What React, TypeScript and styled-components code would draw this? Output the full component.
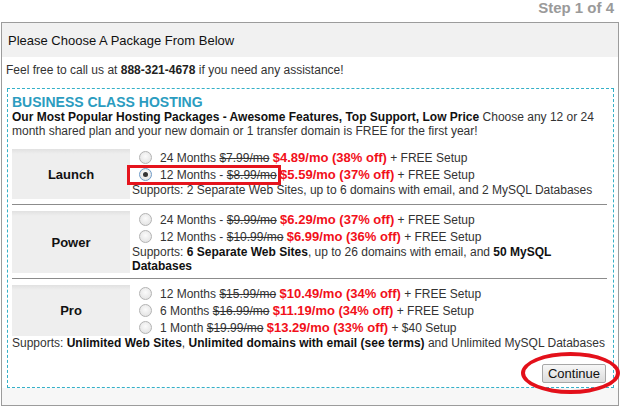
import React from 'react';
import styled, { createGlobalStyle } from 'styled-components';

const GlobalStyle = createGlobalStyle`
    html, body {
        margin: 0;
        padding: 0;
        background: #fff;
    }
    body {
        font-family: "Liberation Sans", Arial, sans-serif;
        font-size: 12px;
        color: #333;
    }
`;

const Page = styled.div`
    width: 620px;
    height: 412px;
    overflow: hidden;
`;
const StepBar = styled.div`
    height: 22px;
    line-height: 15px;
    padding-right: 6px;
    text-align: right;
    font-size: 15px;
    font-weight: bold;
    color: #9a9a9a;
`;
const Panel = styled.div`
    margin: 0 1px;
    border: 1px solid #9c9c9c;
    background: #f7f7f7;
`;
const PanelHeader = styled.div`
    height: 34px;
    display: flex;
    align-items: center;
    padding-left: 6px;
    background: #f1f1f1;
    font-size: 13px;
    color: #111;
`;
const Note = styled.div`
    background: #fff;
    padding: 6px 0 11px 4px;
    line-height: 14px;
    color: #333;

    b { color: #222; }
`;
const OfferWrap = styled.div`
    background: #fff;
`;
const TopRule = styled.div`
    margin: 0 4px 0 5px;
    border-top: 1px dashed #35b0c8;
`;
const Offer = styled.div`
    margin: 0 4px 0 5px;
    padding: 5px 6px 4px 4px;
    border: 1px dashed #35b0c8;
    border-top: 0;
    background: #fff;
`;
const OfferTitle = styled.div`
    font-size: 14px;
    line-height: 16px;
    font-weight: bold;
    color: #2b9cc0;
`;
const Intro = styled.p`
    margin: 0 0 11px;
    line-height: 14px;
    color: #333;

    b { color: #111; }
`;
const Plan = styled.div`
    display: grid;
    grid-template-columns: 118px 1fr;
    column-gap: 2px;
`;
const PlanName = styled.div`
    display: flex;
    align-items: center;
    justify-content: center;
    background: linear-gradient(#e1e1e1, #eeeeee 5px, #eeeeee);
    font-size: 13px;
    font-weight: bold;
    color: #111;
`;
const Options = styled.div<{ $pad: number }>`
    padding-bottom: ${p => p.$pad}px;
`;
const Option = styled.div`
    position: relative;
    height: 17px;
    display: flex;
    align-items: center;
    white-space: nowrap;
    color: #333;
`;
const Radio = styled.span<{ $on?: boolean }>`
    box-sizing: border-box;
    width: 13px;
    height: 13px;
    margin: 0 8px 0 7px;
    border-radius: 50%;
    border: 1px solid ${p => (p.$on ? '#6f9bc8' : '#b3b3b3')};
    background: radial-gradient(circle at 50% 40%, #fbfbfb, #dedede);
    display: flex;
    align-items: center;
    justify-content: center;
    flex: none;

    &::after {
        content: '';
        width: 5px;
        height: 5px;
        border-radius: 50%;
        background: ${p => (p.$on ? '#333' : 'transparent')};
    }
`;
const Old = styled.s`
    color: #333;
`;
const Price = styled.b`
    font-size: 13px;
    color: #f2101a;
`;
const Supports = styled.div<{ $wide?: boolean }>`
    line-height: 14px;
    color: #333;
    white-space: ${p => (p.$wide ? 'nowrap' : 'normal')};

    b { color: #111; }
`;
const Rule = styled.hr`
    margin: 5px 0 6px;
    border: 0;
    border-top: 1px solid #8c8c8c;
`;
const Actions = styled.div`
    display: flex;
    justify-content: flex-end;
    padding: 14px 1px 0 0;
`;
const ButtonWrap = styled.div`
    position: relative;
`;
const Button = styled.button`
    box-sizing: border-box;
    width: 64px;
    height: 19px;
    padding: 0;
    border: 1px solid #a7a7a7;
    border-radius: 2px;
    background: linear-gradient(#f7f7f7, #dcdcdc);
    font-family: "Liberation Sans", Arial, sans-serif;
    font-size: 13px;
    color: #111;
`;
const Highlight = styled.span`
    position: absolute;
    left: -5px;
    top: -1px;
    width: 154px;
    height: 20px;
    box-sizing: border-box;
    border: 3px solid #e5141d;
`;
const Circle = styled.span`
    position: absolute;
    left: -21px;
    top: -12px;
    width: 99px;
    height: 42px;
    box-sizing: border-box;
    border: 4px solid #e3101a;
    border-radius: 50%;
    pointer-events: none;
`;
const Footer = styled.div`
    height: 17px;
    background: #f7f7f7;
`;

type Row = { term: string; old: string; price: string; setup: string; on?: boolean; marked?: boolean };

const plans: { name: string; rows: Row[]; supports?: React.ReactNode; pad: number }[] = [
    {
        name: 'Launch',
        pad: 2,
        rows: [
            { term: '24 Months', old: '$7.99/mo', price: '$4.89/mo (38% off)', setup: '+ FREE Setup' },
            { term: '12 Months -', old: '$8.99/mo', price: '$5.59/mo (37% off)', setup: '+ FREE Setup', on: true, marked: true },
        ],
        supports: <>Supports: 2 Separate Web Sites, up to 6 domains with email, and 2 MySQL Databases</>,
    },
    {
        name: 'Power',
        pad: 0,
        rows: [
            { term: '24 Months -', old: '$9.99/mo', price: '$6.29/mo (37% off)', setup: '+ FREE Setup' },
            { term: '12 Months -', old: '$10.99/mo', price: '$6.99/mo (36% off)', setup: '+ FREE Setup' },
        ],
        supports: (
            <>
                Supports: <b>6 Separate Web Sites</b>, up to 26 domains with email, and <b>50 MySQL</b>
                <br />
                <b>Databases</b>
            </>
        ),
    },
    {
        name: 'Pro',
        pad: 0,
        rows: [
            { term: '12 Months', old: '$15.99/mo', price: '$10.49/mo (34% off)', setup: '+ FREE Setup' },
            { term: '6 Months', old: '$16.99/mo', price: '$11.19/mo (34% off)', setup: '+ FREE Setup' },
            { term: '1 Month', old: '$19.99/mo', price: '$13.29/mo (33% off)', setup: '+ $40 Setup' },
        ],
    },
];

const App = () => {
    return (
        <Page>
            <GlobalStyle />
            <StepBar>Step 1 of 4</StepBar>
            <Panel>
                <PanelHeader>Please Choose A Package From Below</PanelHeader>
                <Note>Feel free to call us at <b>888-321-4678</b> if you need any assistance!</Note>
                <OfferWrap>
                    <TopRule />
                    <Offer>
                        <OfferTitle>BUSINESS CLASS HOSTING</OfferTitle>
                        <Intro>
                            <b>Our Most Popular Hosting Packages - Awesome Features, Top Support, Low Price</b> Choose any 12 or 24
                            <br />
                            month shared plan and your new domain or 1 transfer domain is FREE for the first year!
                        </Intro>
                        {plans.map((plan, i) => (
                            <React.Fragment key={plan.name}>
                                {i > 0 && <Rule />}
                                <Plan>
                                    <PlanName>{plan.name}</PlanName>
                                    <Options $pad={plan.pad}>
                                        {plan.rows.map(r => (
                                            <Option key={r.term + r.old}>
                                                {r.marked && <Highlight />}
                                                <Radio $on={r.on} />
                                                {r.term}&nbsp;<Old>{r.old}</Old>&nbsp;<Price>{r.price}</Price>&nbsp;{r.setup}
                                            </Option>
                                        ))}
                                        {plan.supports && <Supports>{plan.supports}</Supports>}
                                    </Options>
                                </Plan>
                            </React.Fragment>
                        ))}
                        <Supports $wide>
                            Supports: <b>Unlimited Web Sites</b>, <b>Unlimited domains with email (see terms)</b> and Unlimited MySQL Databases
                        </Supports>
                        <Actions>
                            <ButtonWrap>
                                <Button>Continue</Button>
                                <Circle />
                            </ButtonWrap>
                        </Actions>
                    </Offer>
                </OfferWrap>
                <Footer />
            </Panel>
        </Page>
    );
};

export default App;
